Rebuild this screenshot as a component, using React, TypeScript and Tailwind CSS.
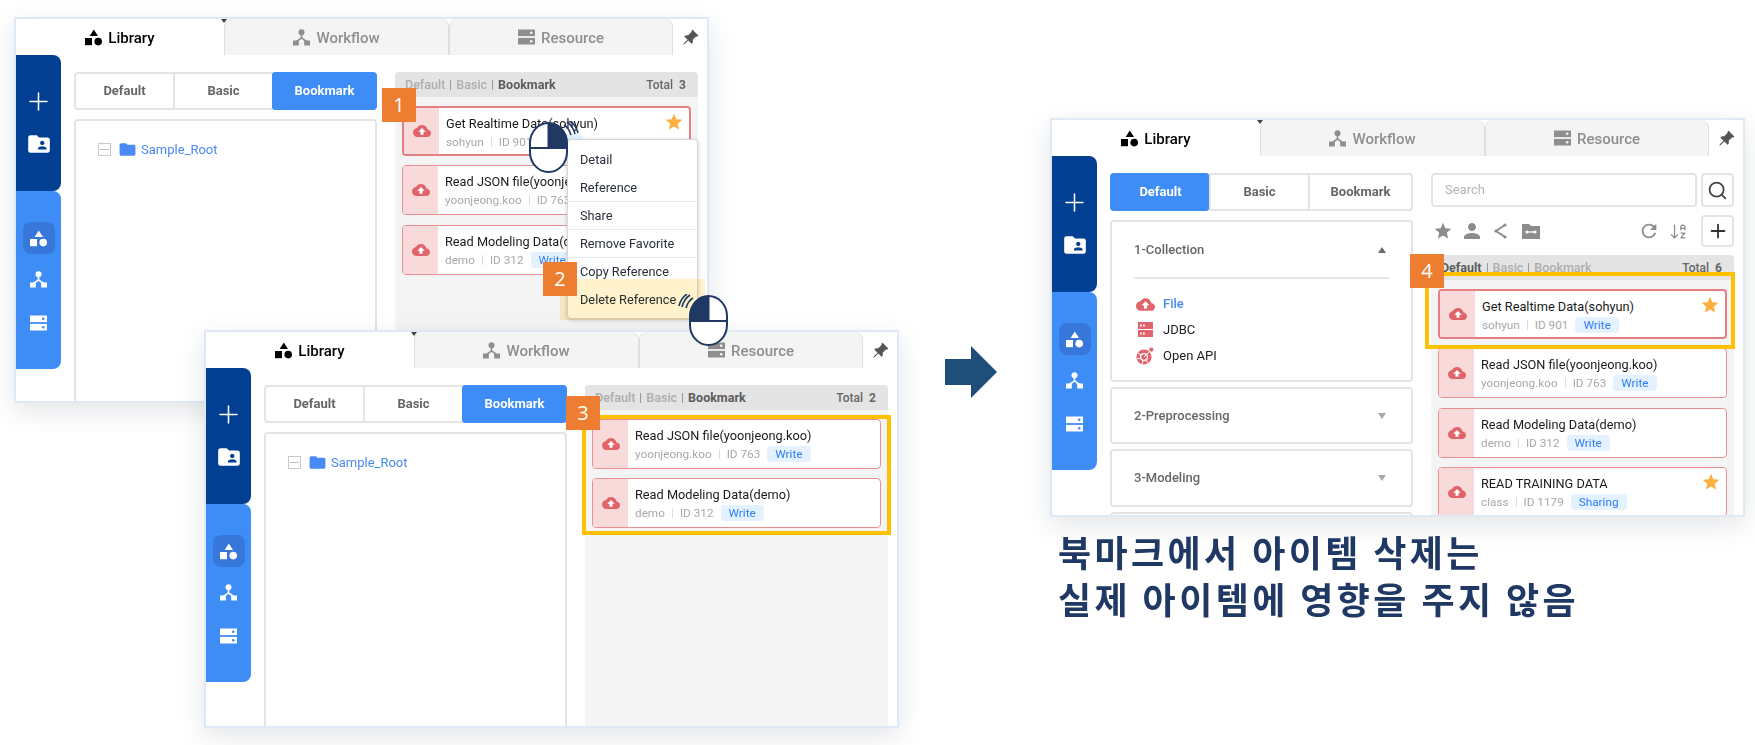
import { ArrowDownAZ, Plus, Search } from 'lucide-react';
import { BsPinAngleFill } from 'react-icons/bs';
import { MdFolder, MdFolderShared, MdPerson, MdRefresh, MdStar } from 'react-icons/md';

type Tab = 'Default' | 'Basic' | 'Bookmark';

type CardData = {
  title: string;
  owner: string;
  id: number;
  badge: string;
  star?: boolean;
  selected?: boolean;
};

const realtime: CardData = { title: 'Get Realtime Data(sohyun)', owner: 'sohyun', id: 901, badge: 'Write', star: true, selected: true };
const json: CardData = { title: 'Read JSON file(yoonjeong.koo)', owner: 'yoonjeong.koo', id: 763, badge: 'Write' };
const modeling: CardData = { title: 'Read Modeling Data(demo)', owner: 'demo', id: 312, badge: 'Write' };
const training: CardData = { title: 'READ TRAINING DATA', owner: 'class', id: 1179, badge: 'Sharing', star: true };

function ShapesIcon({ className }: { className?: string }) {
  return (
    <svg viewBox="0 0 17 17" className={className} fill="currentColor">
      <polygon points="8.8,0.5 13,7 4.6,7" />
      <rect x="0" y="9" width="7" height="7.2" />
      <circle cx="13.2" cy="12.6" r="3.8" />
    </svg>
  );
}

function WorkflowIcon({ className }: { className?: string }) {
  return (
    <svg viewBox="0 0 17 17" className={className} fill="currentColor">
      <circle cx="8.5" cy="3.2" r="3" />
      <path d="M8.5 5.5v3.4L3.5 12.5M8.5 8.9l5 3.6" fill="none" stroke="currentColor" strokeWidth="1.6" />
      <rect x="0" y="11.5" width="5.8" height="5" />
      <rect x="11.2" y="11.5" width="5.8" height="5" />
    </svg>
  );
}

function ServerIcon({ className, dot }: { className?: string; dot: string }) {
  return (
    <svg viewBox="0 0 17 16" className={className} fill="currentColor">
      <rect x="0" y="0.5" width="17" height="6.6" />
      <rect x="0" y="8.9" width="17" height="6.6" />
      <circle cx="13.2" cy="3.8" r="1.3" fill={dot} />
      <circle cx="13.2" cy="12.2" r="1.3" fill={dot} />
    </svg>
  );
}

function CloudIcon({ className }: { className?: string }) {
  return (
    <svg viewBox="0 0 24 24" className={className}>
      <path
        fill="#e0646a"
        d="M19.35 10.04C18.67 6.59 15.64 4 12 4 9.11 4 6.6 5.64 5.35 8.04 2.34 8.36 0 10.91 0 14c0 3.31 2.69 6 6 6h13c2.76 0 5-2.24 5-5 0-2.64-2.05-4.78-4.65-4.96z"
      />
      <path fill="#fff" d="M14 13v4h-4v-4H7l5-5 5 5h-3z" />
    </svg>
  );
}

function JdbcIcon() {
  return (
    <svg viewBox="0 0 15 15" className="w-[15px] h-[15px]">
      <rect x="0" y="0" width="15" height="7" fill="#e0646a" />
      <rect x="0" y="8" width="15" height="7" fill="#e0646a" />
      <rect x="2" y="2.5" width="1.8" height="2" fill="#fff" />
      <rect x="5" y="2.5" width="1.8" height="2" fill="#fff" />
      <rect x="2" y="10.5" width="1.8" height="2" fill="#fff" />
      <rect x="5" y="10.5" width="1.8" height="2" fill="#fff" />
    </svg>
  );
}

function ApiIcon() {
  return (
    <svg viewBox="0 0 18 18" className="w-[18px] h-[18px]">
      <circle cx="8" cy="10" r="7.6" fill="#e0646a" />
      <circle cx="8" cy="10" r="3.4" fill="none" stroke="#fff" strokeWidth="1.3" />
      <path d="M8 10l7-7M2 6l3 2M1 12l3-1M6 17l1-3M12 16l-2-3" stroke="#fff" strokeWidth="1" />
      <circle cx="15.3" cy="2.6" r="2.1" fill="#e0646a" />
    </svg>
  );
}

function FolderLinkIcon() {
  return (
    <svg viewBox="0 0 18 16" className="w-[18px] h-[16px]" fill="#8c8c8c">
      <path d="M0 1h7l2 2h9v13H0z" />
      <path d="M5 9h8" stroke="#fff" strokeWidth="1.3" />
      <circle cx="5" cy="9" r="1.6" fill="#fff" />
      <circle cx="13" cy="9" r="1.6" fill="#fff" />
    </svg>
  );
}

function ShareIcon() {
  return (
    <svg viewBox="0 0 14 16" className="w-[14px] h-[16px]" fill="#8c8c8c">
      <path d="M12 2L3 8l9 6" fill="none" stroke="#8c8c8c" strokeWidth="2" />
      <circle cx="12" cy="2" r="1.6" />
      <circle cx="3" cy="8" r="1.6" />
      <circle cx="12" cy="14" r="1.6" />
    </svg>
  );
}

function Mouse({ className }: { className: string }) {
  return (
    <svg viewBox="0 0 52 54" className={`absolute w-[52px] h-[54px] ${className}`}>
      <rect x="2" y="2" width="37" height="49" rx="18.5" ry="20" fill="#fff" stroke="#1f3864" strokeWidth="2" />
      <path d="M20.5 2A18.5 20 0 0 1 39 22v5H20.5z" fill="#1f3864" />
      <path d="M2 27h37M20.5 2v25" stroke="#1f3864" strokeWidth="2" fill="none" />
      <path d="M36 4q5 3 7 10M39 1q6 4 8 12M42 0q6 4 8 12" stroke="#1f3864" strokeWidth="1.6" fill="none" />
    </svg>
  );
}

function Callout({ n, className }: { n: number; className: string }) {
  return (
    <div className={`absolute w-[34px] h-[34px] bg-[#ed7d31] text-white flex items-center justify-center text-[20px] font-['Open_Sans',sans-serif] ${className}`}>
      {n}
    </div>
  );
}

function TopTab({ icon, label, className }: { icon: React.ReactNode; label: string; className: string }) {
  return (
    <div className={`h-full flex items-center justify-center gap-[6px] rounded-t-lg bg-[#f4f4f4] border-x border-[#dedede] text-[#8e8e8e] text-[15px] font-medium ${className}`}>
      {icon}
      <span className="pt-[2px]">{label}</span>
    </div>
  );
}

function TabBar() {
  return (
    <div className="relative flex h-[36px] shrink-0">
      <div className="w-[208px] h-full flex items-center justify-center gap-[6px] text-[15px] font-medium text-black">
        <ShapesIcon className="w-[17px] h-[17px]" />
        <span className="pt-[2px]">Library</span>
      </div>
      <div className="absolute left-[205px] top-0 w-0 h-0 border-x-[3px] border-x-transparent border-t-[4px] border-t-[#444]" />
      <TopTab className="w-[225px]" label="Workflow" icon={<WorkflowIcon className="w-[17px] h-[17px]" />} />
      <TopTab className="w-[224px]" label="Resource" icon={<ServerIcon className="w-[17px] h-[16px]" dot="#f4f4f4" />} />
      <div className="flex-1 flex items-center justify-center">
        <BsPinAngleFill className="w-[17px] h-[17px] text-[#555]" />
      </div>
    </div>
  );
}

function SideBar() {
  return (
    <div className="w-[45px] shrink-0 text-white">
      <div className="h-[136px] bg-[#003f91] rounded-r-lg flex flex-col items-center pt-[32px]">
        <Plus className="w-[29px] h-[29px]" strokeWidth={1.3} />
        <MdFolderShared className="w-[26px] h-[26px] mt-[15px]" />
      </div>
      <div className="h-[178px] bg-[#3e8cf5] rounded-r-lg flex flex-col items-center pt-[31px]">
        <div className="w-[32px] h-[32px] rounded-lg bg-[#3777d9] flex items-center justify-center">
          <ShapesIcon className="w-[17px] h-[17px]" />
        </div>
        <WorkflowIcon className="w-[17px] h-[17px] mt-[17px]" />
        <ServerIcon className="w-[17px] h-[16px] mt-[27px]" dot="#3e8cf5" />
      </div>
    </div>
  );
}

function Segments({ active }: { active: Tab }) {
  const tabs: { name: Tab; width: string; edge: string }[] = [
    { name: 'Default', width: 'w-[99px]', edge: 'border-l-2 rounded-l' },
    { name: 'Basic', width: 'w-[99px]', edge: 'border-l-2' },
    { name: 'Bookmark', width: 'flex-1', edge: 'border-x-2 rounded-r' },
  ];
  return (
    <div className="h-[38px] shrink-0 flex text-[13px] font-bold text-[#666]">
      {tabs.map(t => (
        <div
          key={t.name}
          className={`${t.width} ${t.edge} border-y-2 flex items-center justify-center ${
            t.name === active ? 'bg-[#3e8cf5] border-[#3e8cf5] text-white rounded-[3px]' : 'border-[#e4e4e4]'
          }`}
        >
          {t.name}
        </div>
      ))}
    </div>
  );
}

function Tree() {
  return (
    <div className="flex-1 mt-[9px] rounded-t border-x-2 border-t-2 border-[#e4e4e4] pl-[22px] pt-[19px]">
      <div className="flex items-center text-[13px] text-[#4a8af4]">
        <div className="w-[13px] h-[13px] border border-[#c9c9c9] flex items-center justify-center">
          <div className="w-[9px] h-px bg-[#bdbdbd]" />
        </div>
        <MdFolder className="w-[19px] h-[19px] ml-[7px] mr-[4px]" />
        Sample_Root
      </div>
    </div>
  );
}

function Triangle({ up }: { up?: boolean }) {
  return up ? (
    <div className="w-0 h-0 border-x-[4.5px] border-x-transparent border-b-[6px] border-b-[#6b6b6b]" />
  ) : (
    <div className="w-0 h-0 border-x-[4.5px] border-x-transparent border-t-[6px] border-t-[#a8a8a8]" />
  );
}

function Accordions() {
  return (
    <div className="flex-1 mt-[9px] flex flex-col gap-[5px] text-[13px] font-medium text-[#666]">
      <div className="h-[162px] shrink-0 rounded border-2 border-[#e4e4e4] px-[22px]">
        <div className="h-[57px] flex items-center justify-between pr-[2px] border-b-2 border-[#e6e6e6]">
          1-Collection
          <div className="mr-[1px]"><Triangle up /></div>
        </div>
        <div className="pt-[12px] flex flex-col text-[#222] font-normal">
          <div className="h-[26px] flex items-center gap-[7px] text-[#4a8af4] font-medium">
            <div className="w-[22px] flex justify-center"><CloudIcon className="w-[19px] h-[19px]" /></div>
            File
          </div>
          <div className="h-[25px] flex items-center gap-[7px]">
            <div className="w-[22px] flex justify-center"><JdbcIcon /></div>
            JDBC
          </div>
          <div className="h-[27px] flex items-center gap-[7px]">
            <div className="w-[22px] flex justify-center"><ApiIcon /></div>
            Open API
          </div>
        </div>
      </div>
      <div className="h-[57px] shrink-0 rounded border-2 border-[#e4e4e4] pl-[22px] pr-[25px] flex items-center justify-between">
        2-Preprocessing
        <Triangle />
      </div>
      <div className="h-[58px] shrink-0 rounded border-2 border-[#e4e4e4] pl-[22px] pr-[25px] flex items-center justify-between">
        3-Modeling
        <Triangle />
      </div>
      <div className="h-[58px] shrink-0 rounded border-2 border-[#e4e4e4]" />
    </div>
  );
}

function Toolbar() {
  return (
    <div className="shrink-0">
      <div className="flex gap-[4px] h-[34px]">
        <div className="flex-1 rounded border-2 border-[#e4e4e4] flex items-center pl-[12px] text-[13px] text-[#b5b5b5]">Search</div>
        <div className="w-[33px] rounded border-2 border-[#e4e4e4] flex items-center justify-center">
          <Search className="w-[21px] h-[21px] text-[#444]" strokeWidth={2} />
        </div>
      </div>
      <div className="flex items-center h-[32px] mt-[8px] pl-[2px]">
        <MdStar className="w-[20px] h-[20px] text-[#8c8c8c]" />
        <MdPerson className="w-[24px] h-[24px] text-[#8c8c8c] ml-[7px]" />
        <div className="ml-[9px]"><ShareIcon /></div>
        <div className="ml-[15px]"><FolderLinkIcon /></div>
        <MdRefresh className="w-[22px] h-[22px] text-[#8c8c8c] ml-auto" />
        <ArrowDownAZ className="w-[19px] h-[19px] text-[#8c8c8c] ml-[9px]" strokeWidth={1.6} />
        <div className="w-[33px] h-[32px] ml-[13px] rounded border-2 border-[#e4e4e4] flex items-center justify-center">
          <Plus className="w-[22px] h-[22px] text-[#333]" strokeWidth={2} />
        </div>
      </div>
      <div className="h-[8px]" />
    </div>
  );
}

function Card({ card }: { card: CardData }) {
  return (
    <div className={`relative h-[50px] shrink-0 flex rounded bg-white overflow-hidden ${card.selected ? 'border-2 border-[#e67f83]' : 'border border-[#e88f92]'}`}>
      <div className="w-[35px] shrink-0 bg-[#f8dadb] flex items-center justify-center">
        <CloudIcon className="w-[18px] h-[18px]" />
      </div>
      <div className="pl-[7px] pt-[7px] min-w-0">
        <div className="text-[12.75px] leading-[18px] text-[#1a1a1a] whitespace-nowrap">{card.title}</div>
        <div className="flex items-center text-[11.75px] leading-[16px] text-[#a8a8a8] whitespace-nowrap mt-[1px]">
          {card.owner}
          <span className="w-px h-[10px] bg-[#dcdcdc] mx-[7px]" />
          ID {card.id}
          <span className="ml-[7px] px-[8px] h-[16px] rounded-sm bg-[#e4f1fe] text-[#2f80f5] flex items-center">{card.badge}</span>
        </div>
      </div>
      {card.star && <MdStar className="absolute right-[5px] top-[4px] w-[20px] h-[20px] text-[#fbb040]" />}
    </div>
  );
}

function CardList({ active, total, cards }: { active: Tab; total: number; cards: CardData[] }) {
  const names: Tab[] = ['Default', 'Basic', 'Bookmark'];
  return (
    <div className="flex-1 min-h-0 bg-[#f4f4f4] overflow-hidden rounded-t">
      <div className="h-[25px] pt-[1px] bg-[#e4e4e4] flex items-center justify-between px-[10px] pr-[12px] text-[12.5px]">
        <div className="flex items-center font-medium text-[#adadad]">
          {names.map((n, i) => (
            <span key={n} className="flex items-center">
              {i > 0 && <span className="w-px h-[10px] bg-[#9a9a9a] mx-[5px]" />}
              <span className={n === active ? 'font-bold text-[#5c5c5c]' : ''}>{n}</span>
            </span>
          ))}
        </div>
        <div className="font-medium text-[#666] text-[12px]">
          Total<span className="ml-[6px] font-bold">{total}</span>
        </div>
      </div>
      <div className="flex flex-col gap-[9.3px] px-[7px] pt-[9px]">
        {cards.map(c => (
          <Card key={c.id} card={c} />
        ))}
      </div>
    </div>
  );
}

function Panel({ className, left, right }: { className: string; left: React.ReactNode; right: React.ReactNode }) {
  return (
    <div className={`absolute w-[695px] border-2 border-[#dfe9f5] bg-white flex flex-col overflow-hidden shadow-[0_8px_24px_rgba(60,70,90,0.14)] ${className}`}>
      <TabBar />
      <div className="flex-1 min-h-0 flex">
        <SideBar />
        <div className="w-[303px] ml-[13px] pt-[17px] flex flex-col shrink-0">{left}</div>
        <div className="w-[303px] ml-[18px] pt-[17px] flex flex-col shrink-0">{right}</div>
      </div>
    </div>
  );
}

function ContextMenu() {
  const groups = [['Detail', 'Reference'], ['Share'], ['Remove Favorite'], ['Copy Reference', 'Delete Reference']];
  return (
    <div className="absolute left-[567px] top-[139px] w-[131px] h-[180px] py-[6px] rounded bg-white border border-[#d8d8d8] shadow-[0_1px_4px_rgba(0,0,0,0.2)] text-[12.75px] text-[#2a2f3a]">
      {groups.map((g, i) => (
        <div key={i} className={i > 0 ? 'border-t border-[#e8e8e8] -mt-px' : ''}>
          {g.map(item => (
            <div key={item} className="h-[28px] flex items-center pl-[12px] whitespace-nowrap">{item}</div>
          ))}
        </div>
      ))}
    </div>
  );
}

export default function App() {
  return (
    <div className="relative w-[1755px] h-[745px] overflow-hidden bg-white font-['Roboto',sans-serif]">
      <Panel
        className="left-[14px] top-[17px] h-[386px]"
        left={<><Segments active="Bookmark" /><Tree /></>}
        right={<CardList active="Bookmark" total={3} cards={[realtime, json, modeling]} />}
      />
      <ContextMenu />
      <div className="absolute left-[560px] top-[279px] w-[145px] h-[41px] bg-[#fff2cc] mix-blend-multiply" />
      <Panel
        className="left-[204px] top-[330px] h-[398px]"
        left={<><Segments active="Bookmark" /><Tree /></>}
        right={<CardList active="Bookmark" total={2} cards={[json, modeling]} />}
      />
      <Panel
        className="left-[1050px] top-[118px] h-[399px]"
        left={<><Segments active="Default" /><Accordions /></>}
        right={<><Toolbar /><CardList active="Default" total={6} cards={[realtime, json, modeling, training]} /></>}
      />

      <div className="absolute left-[582px] top-[415px] w-[309px] h-[120px] border-[4px] border-[#ffc000]" />
      <div className="absolute left-[1425px] top-[272px] w-[310px] h-[77px] border-[4px] border-[#ffc000]" />
      <Callout n={1} className="left-[382px] top-[88px]" />
      <Callout n={2} className="left-[543px] top-[262px]" />
      <Callout n={3} className="left-[566px] top-[396px]" />
      <Callout n={4} className="left-[1410px] top-[254px]" />
      <Mouse className="left-[528px] top-[121px]" />
      <Mouse className="left-[677px] top-[294px] -scale-x-100" />

      <svg viewBox="0 0 52 52" className="absolute left-[945px] top-[346px] w-[52px] h-[52px]">
        <polygon points="0,13 26,13 26,0 52,26 26,52 26,39 0,39" fill="#1f4e79" />
      </svg>

      <div className="absolute left-[1058px] top-[528px] font-['Noto_Sans_CJK_KR',sans-serif] font-bold text-[36px] leading-[47px] tracking-[3.4px] text-[#1f3864] whitespace-nowrap">
        <div>북마크에서 아이템 삭제는</div>
        <div>실제 아이템에 영향을 주지 않음</div>
      </div>
    </div>
  );
}
